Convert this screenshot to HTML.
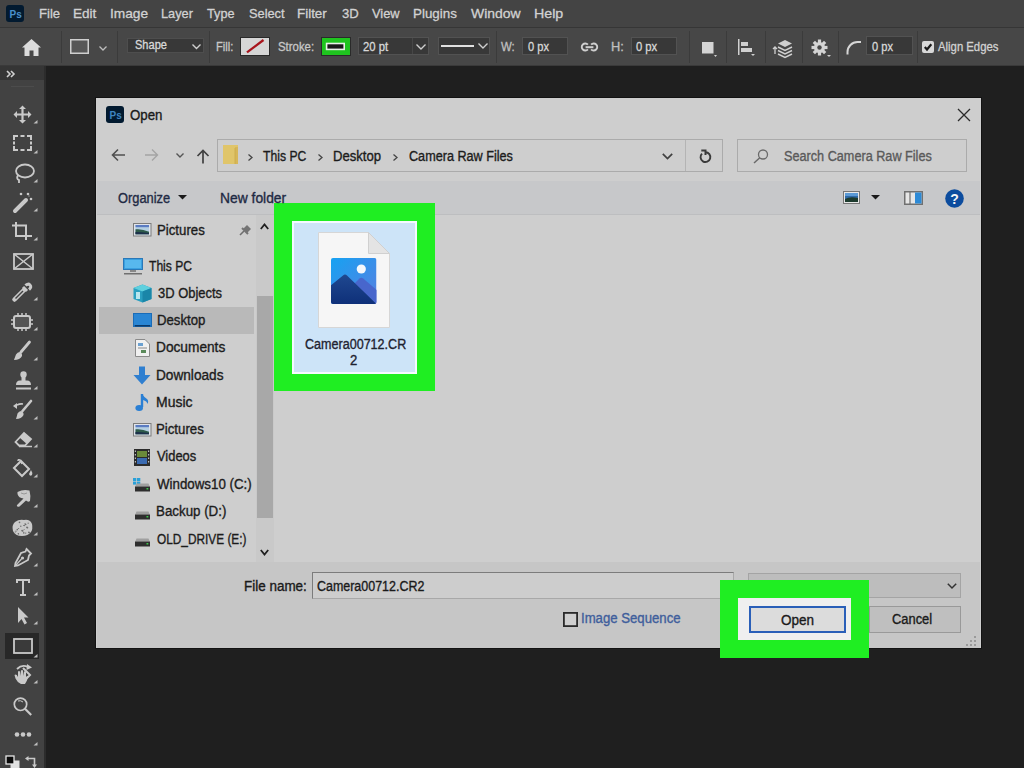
<!DOCTYPE html>
<html><head><meta charset="utf-8">
<style>
*{margin:0;padding:0;box-sizing:border-box}
html,body{width:1024px;height:768px;overflow:hidden;background:#1f1f1f;font-family:"Liberation Sans",sans-serif}
.a{position:absolute}
.t{position:absolute;white-space:nowrap;line-height:1}
svg{position:absolute;overflow:visible}
</style></head><body>
<div class="a" style="left:0px;top:0px;width:1024px;height:27px;background:#444444;"></div>
<div class="a" style="left:0px;top:27px;width:1024px;height:1px;background:#363636;"></div>
<div class="a" style="left:0px;top:28px;width:1024px;height:38px;background:#474747;"></div>
<div class="a" style="left:0px;top:65px;width:1024px;height:1px;background:#3a3a3a;"></div>
<div class="a" style="left:0px;top:66px;width:44px;height:14px;background:#353535;"></div>
<div class="a" style="left:0px;top:80px;width:44px;height:688px;background:#424242;"></div>
<div class="a" style="left:44px;top:66px;width:2px;height:702px;background:#2c2c2c;"></div>
<svg style="left:6px;top:4.7px;" width="18" height="17" viewBox="0 0 18 17"><rect x="0" y="0" width="18" height="17" rx="3" fill="#021a30"/><text x="3.6" y="12.5" font-family="Liberation Sans" font-weight="bold" font-size="10" fill="#4a90cc">Ps</text></svg>
<div class="a" style="left:61px;top:31px;width:1px;height:32px;background:#3b3b3b;"></div>
<div class="a" style="left:117px;top:31px;width:1px;height:32px;background:#3b3b3b;"></div>
<div class="a" style="left:209px;top:31px;width:1px;height:32px;background:#3b3b3b;"></div>
<div class="a" style="left:496px;top:31px;width:1px;height:32px;background:#3b3b3b;"></div>
<div class="a" style="left:689px;top:31px;width:1px;height:32px;background:#3b3b3b;"></div>
<div class="a" style="left:726px;top:31px;width:1px;height:32px;background:#3b3b3b;"></div>
<div class="a" style="left:765px;top:31px;width:1px;height:32px;background:#3b3b3b;"></div>
<div class="a" style="left:802px;top:31px;width:1px;height:32px;background:#3b3b3b;"></div>
<div class="a" style="left:838px;top:31px;width:1px;height:32px;background:#3b3b3b;"></div>
<div class="a" style="left:917px;top:31px;width:1px;height:32px;background:#3b3b3b;"></div>
<svg style="left:22px;top:39px;" width="19" height="17" viewBox="0 0 19 17"><path d="M9.5 0 L19 8.5 L16.5 8.5 L16.5 17 L11.5 17 L11.5 11.5 L7.5 11.5 L7.5 17 L2.5 17 L2.5 8.5 L0 8.5 Z" fill="#dcdcdc"/></svg>
<svg style="left:70px;top:39px;" width="19" height="15" viewBox="0 0 19 15"><rect x="0.75" y="0.75" width="17.5" height="13.5" fill="#575757" stroke="#cfcfcf" stroke-width="1.5"/></svg>
<svg style="left:99px;top:46px;" width="8" height="5" viewBox="0 0 8 5"><path d="M0.5 0.5 L4 4 L7.5 0.5" fill="none" stroke="#bdbdbd" stroke-width="1.3"/></svg>
<div class="a" style="left:127px;top:38px;width:77px;height:15px;background:#383838;border:1px solid #4e4e4e"></div>
<svg style="left:192px;top:44px;" width="9" height="5" viewBox="0 0 9 5"><path d="M0.5 0.5 L4.5 4.5 L8.5 0.5" fill="none" stroke="#cfcfcf" stroke-width="1.4"/></svg>
<div class="a" style="left:240px;top:37px;width:30px;height:19px;background:#2a2a2a;"></div>
<div class="a" style="left:241px;top:38px;width:28px;height:17px;background:#d6d6d6;"></div>
<svg style="left:241px;top:38px;" width="28" height="17" viewBox="0 0 28 17"><path d="M6 14.3 L22.5 2" stroke="#a8141c" stroke-width="2.3"/></svg>
<div class="a" style="left:321px;top:37px;width:30px;height:19px;background:#2a2a2a;"></div>
<div class="a" style="left:322px;top:38px;width:28px;height:17px;background:#1fc41f;"></div>
<svg style="left:322px;top:38px;" width="28" height="17" viewBox="0 0 28 17"><rect x="4.6" y="5.5" width="17.6" height="5.9" fill="#1a1a1a" stroke="#e8f0e8" stroke-width="1.6"/></svg>
<div class="a" style="left:358px;top:37px;width:71px;height:18px;background:#383838;border:1px solid #525252"></div>
<div class="a" style="left:412px;top:38px;width:1px;height:16px;background:#474747;"></div>
<svg style="left:416px;top:44px;" width="10" height="6" viewBox="0 0 10 6"><path d="M0.5 0.5 L5 5 L9.5 0.5" fill="none" stroke="#cfcfcf" stroke-width="1.4"/></svg>
<div class="a" style="left:438px;top:37px;width:52px;height:18px;background:#383838;border:1px solid #525252"></div>
<div class="a" style="left:441px;top:45px;width:33px;height:2px;background:#e0e0e0;"></div>
<svg style="left:478px;top:43px;" width="10" height="6" viewBox="0 0 10 6"><path d="M0.5 0.5 L5 5 L9.5 0.5" fill="none" stroke="#cfcfcf" stroke-width="1.4"/></svg>
<div class="a" style="left:522px;top:37px;width:46px;height:18px;background:#383838;border:1px solid #525252"></div>
<svg style="left:581px;top:41px;" width="17" height="12" viewBox="0 0 17 12"><path d="M6.9 3.7 A3.5 3.5 0 1 0 6.9 8.3 M10.1 3.7 A3.5 3.5 0 1 1 10.1 8.3" fill="none" stroke="#cfcfcf" stroke-width="1.9"/><path d="M4.6 6.2 H12.4" stroke="#cfcfcf" stroke-width="2"/></svg>
<div class="a" style="left:631px;top:37px;width:46px;height:18px;background:#383838;border:1px solid #525252"></div>
<svg style="left:702px;top:42px;" width="16" height="16" viewBox="0 0 16 16"><rect x="0" y="0" width="11.5" height="11.5" fill="#d4d4d4"/><path d="M12 13 L15 13 L13.5 15 Z" fill="#cfcfcf"/></svg>
<svg style="left:738px;top:39px;" width="17" height="18" viewBox="0 0 17 18"><rect x="0" y="0" width="1.5" height="16" fill="#d0d0d0"/><rect x="3" y="3" width="7" height="4" fill="#d0d0d0"/><rect x="3" y="9" width="11" height="4" fill="#d0d0d0"/><path d="M13 15 L17 15 L15 17 Z" fill="#cfcfcf"/></svg>
<svg style="left:772px;top:39px;" width="23" height="19" viewBox="0 0 23 19"><path d="M3 8 L3 15 M1 10 L3 8 L5 10" fill="none" stroke="#d0d0d0" stroke-width="1.3"/><path d="M13 1 L20 4.5 L13 8 L6 4.5 Z" fill="#d0d0d0"/><path d="M6 8 L13 11.5 L20 8 M6 11.5 L13 15 L20 11.5 M6 15 L13 18.5 L20 15" fill="none" stroke="#d0d0d0" stroke-width="1.5"/></svg>
<svg style="left:811px;top:40px;" width="20" height="18" viewBox="0 0 20 18"><g transform="translate(8.5,7.5)"><circle r="5.5" fill="#d4d4d4"/><g fill="#d4d4d4"><rect x="-1.6" y="-8" width="3.2" height="16"/><rect x="-1.6" y="-8" width="3.2" height="16" transform="rotate(45)"/><rect x="-1.6" y="-8" width="3.2" height="16" transform="rotate(90)"/><rect x="-1.6" y="-8" width="3.2" height="16" transform="rotate(135)"/></g><circle r="2.2" fill="#474747"/></g><path d="M16 15 L20 15 L18 17 Z" fill="#cfcfcf"/></svg>
<svg style="left:846px;top:40px;" width="17" height="15" viewBox="0 0 17 15"><path d="M1.5 14.5 L1.5 12 A10 10 0 0 1 11.5 2 L15 2" fill="none" stroke="#d6d6d6" stroke-width="2"/></svg>
<div class="a" style="left:866px;top:36px;width:47px;height:19px;background:#383838;border:1px solid #525252"></div>
<svg style="left:921.5px;top:40.5px;" width="12" height="12" viewBox="0 0 12 12"><rect x="0" y="0" width="12" height="12" rx="2" fill="#d8d8d8"/><path d="M2.8 6 L5 8.5 L9.3 3.3" fill="none" stroke="#1a1a1a" stroke-width="2.2"/></svg>
<svg style="left:6px;top:70px;" width="10" height="8" viewBox="0 0 10 8"><path d="M1 1 L4 4 L1 7 M5 1 L8 4 L5 7" fill="none" stroke="#d0d0d0" stroke-width="1.6"/></svg>
<div class="a" style="left:11px;top:86px;width:23px;height:1px;background:#4c4c4c;"></div>
<svg style="left:13px;top:105px;" width="19" height="19" viewBox="0 0 19 19"><path d="M9.5 0.5 L13 4 L10.6 4 L10.6 8.4 L15 8.4 L15 6 L18.5 9.5 L15 13 L15 10.6 L10.6 10.6 L10.6 15 L13 15 L9.5 18.5 L6 15 L8.4 15 L8.4 10.6 L4 10.6 L4 13 L0.5 9.5 L4 6 L4 8.4 L8.4 8.4 L8.4 4 L6 4 Z" fill="#c9c9c9"/></svg>
<svg style="left:33px;top:120px;" width="5" height="4" viewBox="0 0 5 4"><path d="M4.5 0 L4.5 3.5 L0.5 3.5 Z" fill="#bdbdbd"/></svg>
<svg style="left:13px;top:135px;" width="19" height="16" viewBox="0 0 19 16"><path d="M1 5 V1 H5 M7.5 1 H11.5 M14 1 H18 V5 M18 6.5 V9.5 M18 11 V15 H14 M11.5 15 H7.5 M5 15 H1 V11 M1 9.5 V6.5" fill="none" stroke="#c9c9c9" stroke-width="2"/></svg>
<svg style="left:33px;top:150px;" width="5" height="4" viewBox="0 0 5 4"><path d="M4.5 0 L4.5 3.5 L0.5 3.5 Z" fill="#bdbdbd"/></svg>
<svg style="left:14px;top:163px;" width="21" height="21" viewBox="0 0 21 21"><ellipse cx="11" cy="8" rx="9" ry="6.5" fill="none" stroke="#c9c9c9" stroke-width="1.8"/><path d="M4 12 Q2 16 5 17 L5 20" fill="none" stroke="#c9c9c9" stroke-width="1.8"/></svg>
<svg style="left:33px;top:179px;" width="5" height="4" viewBox="0 0 5 4"><path d="M4.5 0 L4.5 3.5 L0.5 3.5 Z" fill="#bdbdbd"/></svg>
<svg style="left:13px;top:192px;" width="22" height="21" viewBox="0 0 22 21"><path d="M2 19 L13 8" stroke="#c9c9c9" stroke-width="4" stroke-linecap="round"/><circle cx="8" cy="2" r="1.3" fill="#c9c9c9"/><circle cx="15" cy="2" r="1.3" fill="#c9c9c9"/><circle cx="18" cy="7" r="1.3" fill="#c9c9c9"/><path d="M15.5 4 l1 0" stroke="#c9c9c9"/></svg>
<svg style="left:33px;top:208px;" width="5" height="4" viewBox="0 0 5 4"><path d="M4.5 0 L4.5 3.5 L0.5 3.5 Z" fill="#bdbdbd"/></svg>
<svg style="left:11px;top:222px;" width="23" height="19" viewBox="0 0 23 19"><path d="M1 3.5 L15 3.5 L15 18 M5 0 L5 14 L21 14" fill="none" stroke="#c9c9c9" stroke-width="2"/></svg>
<svg style="left:33px;top:237px;" width="5" height="4" viewBox="0 0 5 4"><path d="M4.5 0 L4.5 3.5 L0.5 3.5 Z" fill="#bdbdbd"/></svg>
<svg style="left:13px;top:253px;" width="21" height="17" viewBox="0 0 21 17"><rect x="1" y="1" width="19" height="15" fill="none" stroke="#c9c9c9" stroke-width="1.8"/><path d="M1 1 L20 16 M20 1 L1 16" stroke="#c9c9c9" stroke-width="1.5"/></svg>
<svg style="left:12px;top:282px;" width="21" height="20" viewBox="0 0 21 20"><path d="M2.5 17.5 L12 8" stroke="#c9c9c9" stroke-width="4.5" stroke-linecap="round"/><path d="M3.5 16.5 L11 9" stroke="#424242" stroke-width="1.5"/><path d="M11 5 L15 9 M13.5 3.5 Q16 1 18 3 Q20 5 17 7.5" stroke="#c9c9c9" stroke-width="3" fill="none"/></svg>
<svg style="left:33px;top:297px;" width="5" height="4" viewBox="0 0 5 4"><path d="M4.5 0 L4.5 3.5 L0.5 3.5 Z" fill="#bdbdbd"/></svg>
<svg style="left:11px;top:313px;" width="22" height="18" viewBox="0 0 22 18"><rect x="3" y="3" width="16" height="12" rx="2" fill="#555" stroke="#c9c9c9" stroke-width="2"/><path d="M7 0 V3 M11 0 V3 M15 0 V3 M7 15 V18 M11 15 V18 M15 15 V18 M0 7 H3 M0 11 H3 M19 7 H22 M19 11 H22" stroke="#c9c9c9" stroke-width="1.5"/></svg>
<svg style="left:33px;top:327px;" width="5" height="4" viewBox="0 0 5 4"><path d="M4.5 0 L4.5 3.5 L0.5 3.5 Z" fill="#bdbdbd"/></svg>
<svg style="left:13px;top:341px;" width="18" height="20" viewBox="0 0 18 20"><path d="M16.5 1 L8 11" stroke="#c9c9c9" stroke-width="2.8" stroke-linecap="round"/><path d="M6.5 11 Q9.5 12 9 15 Q7 19 1 19 Q2 16 3 13.5 Q4.5 11 6.5 11 Z" fill="#c9c9c9"/></svg>
<svg style="left:33px;top:357px;" width="5" height="4" viewBox="0 0 5 4"><path d="M4.5 0 L4.5 3.5 L0.5 3.5 Z" fill="#bdbdbd"/></svg>
<svg style="left:15px;top:371px;" width="17" height="19" viewBox="0 0 17 19"><circle cx="8.5" cy="3.5" r="3.2" fill="#c9c9c9"/><rect x="6.5" y="5" width="4" height="5" fill="#c9c9c9"/><path d="M1 14 Q1 9.5 5 9.5 L12 9.5 Q16 9.5 16 14 Z" fill="#c9c9c9"/><rect x="1" y="16.5" width="15" height="2" fill="#c9c9c9"/></svg>
<svg style="left:33px;top:386px;" width="5" height="4" viewBox="0 0 5 4"><path d="M4.5 0 L4.5 3.5 L0.5 3.5 Z" fill="#bdbdbd"/></svg>
<svg style="left:12px;top:400px;" width="21" height="20" viewBox="0 0 21 20"><path d="M19 1 L10.5 11" stroke="#c9c9c9" stroke-width="2.6" stroke-linecap="round"/><path d="M9 11 Q12 12 11.5 15 Q9.5 19 4 19 Q5 16 5.5 13.5 Q7 11 9 11 Z" fill="#c9c9c9"/><path d="M1 6 L5 3 L5 9 Z" fill="#c9c9c9"/><path d="M5 5 Q8 3.5 11 4" fill="none" stroke="#c9c9c9" stroke-width="1.5"/></svg>
<svg style="left:33px;top:416px;" width="5" height="4" viewBox="0 0 5 4"><path d="M4.5 0 L4.5 3.5 L0.5 3.5 Z" fill="#bdbdbd"/></svg>
<svg style="left:14px;top:431px;" width="19" height="17" viewBox="0 0 19 17"><path d="M1.5 11 L10 2 L17 8 L11 14.5 L5 14.5 Z" fill="none" stroke="#c9c9c9" stroke-width="1.8"/><path d="M10 2 L17 8 L12.5 12.8 L5.5 6.5 Z" fill="#c9c9c9"/><path d="M5 15.5 L18 15.5" stroke="#c9c9c9" stroke-width="1.5"/></svg>
<svg style="left:33px;top:444px;" width="5" height="4" viewBox="0 0 5 4"><path d="M4.5 0 L4.5 3.5 L0.5 3.5 Z" fill="#bdbdbd"/></svg>
<svg style="left:12px;top:459px;" width="23" height="20" viewBox="0 0 23 20"><path d="M2 9 L9 2 L17 10 L10 17 Z" fill="none" stroke="#c9c9c9" stroke-width="2"/><path d="M6 2 Q6 0 8 1 L10 5" fill="none" stroke="#c9c9c9" stroke-width="1.5"/><path d="M19 11 Q21 14 20 16 Q18 18 17 15 Z" fill="#c9c9c9"/></svg>
<svg style="left:33px;top:474px;" width="5" height="4" viewBox="0 0 5 4"><path d="M4.5 0 L4.5 3.5 L0.5 3.5 Z" fill="#bdbdbd"/></svg>
<svg style="left:16px;top:489px;" width="16" height="19" viewBox="0 0 16 19"><path d="M1.5 3 Q7 0 13.5 1.5 Q15 7 14 12 Q12 13.5 10 11.5 L3.5 17.5 Q1 18.5 0.8 16.3 L7.5 9.5 Q2.5 9 1.5 5 Z" fill="#c9c9c9"/><path d="M5 4 Q8 6 11 4" fill="none" stroke="#8a8a8a" stroke-width="0.8"/></svg>
<svg style="left:33px;top:504px;" width="5" height="4" viewBox="0 0 5 4"><path d="M4.5 0 L4.5 3.5 L0.5 3.5 Z" fill="#bdbdbd"/></svg>
<svg style="left:12px;top:519px;" width="21" height="18" viewBox="0 0 21 18"><path d="M3 3 Q7 0 12 1 Q18 0 20 5 Q21 10 19 13 Q16 17 10 17 Q3 17 1 12 Q-0.5 6 3 3 Z" fill="#c9c9c9"/><g fill="#6e6e6e"><circle cx="6.6" cy="9.5" r="0.6"/><circle cx="12.1" cy="10.5" r="0.5"/><circle cx="3.2" cy="13.0" r="0.6"/><circle cx="6.5" cy="14.9" r="0.7"/><circle cx="15.5" cy="8.7" r="0.8"/><circle cx="5.3" cy="10.6" r="0.8"/><circle cx="10.8" cy="11.9" r="0.8"/><circle cx="4.0" cy="12.1" r="0.7"/><circle cx="7.5" cy="3.4" r="0.8"/><circle cx="10.1" cy="11.6" r="0.9"/><circle cx="13.7" cy="14.1" r="0.7"/><circle cx="15.0" cy="8.3" r="0.9"/><circle cx="16.2" cy="4.2" r="0.6"/><circle cx="6.3" cy="14.6" r="0.7"/><circle cx="12.4" cy="6.6" r="0.7"/><circle cx="8.8" cy="7.2" r="0.7"/><circle cx="11.8" cy="13.9" r="0.8"/><circle cx="16.9" cy="13.3" r="0.9"/><circle cx="13.1" cy="5.0" r="0.8"/><circle cx="17.5" cy="13.9" r="0.7"/><circle cx="13.7" cy="5.5" r="0.8"/><circle cx="11.6" cy="6.4" r="0.5"/></g></svg>
<svg style="left:33px;top:532px;" width="5" height="4" viewBox="0 0 5 4"><path d="M4.5 0 L4.5 3.5 L0.5 3.5 Z" fill="#bdbdbd"/></svg>
<svg style="left:14px;top:548px;" width="18" height="19" viewBox="0 0 18 19"><path d="M12.5 1 L17 5.5 L15 7.5 L14 12 L4 17.5 L1 18 L1.5 15 L7 5 L11.5 3.5 Z" fill="none" stroke="#c9c9c9" stroke-width="1.8"/><circle cx="8.5" cy="10" r="1.6" fill="#c9c9c9"/><path d="M2 17 L7.5 11" stroke="#c9c9c9" stroke-width="1.2"/></svg>
<svg style="left:33px;top:563px;" width="5" height="4" viewBox="0 0 5 4"><path d="M4.5 0 L4.5 3.5 L0.5 3.5 Z" fill="#bdbdbd"/></svg>
<svg style="left:16px;top:579px;" width="14" height="17" viewBox="0 0 14 17"><path d="M1 4 L1 1 L13 1 L13 4 M7 1 L7 16 M4 16 L10 16" fill="none" stroke="#c9c9c9" stroke-width="2"/></svg>
<svg style="left:33px;top:592px;" width="5" height="4" viewBox="0 0 5 4"><path d="M4.5 0 L4.5 3.5 L0.5 3.5 Z" fill="#bdbdbd"/></svg>
<svg style="left:17px;top:606px;" width="12" height="19" viewBox="0 0 12 19"><path d="M1 1 L1 17 L4.5 13 L7.5 18.5 L10 17 L7 11.5 L11.5 11.5 Z" fill="#c9c9c9"/></svg>
<svg style="left:33px;top:621px;" width="5" height="4" viewBox="0 0 5 4"><path d="M4.5 0 L4.5 3.5 L0.5 3.5 Z" fill="#bdbdbd"/></svg>
<div class="a" style="left:5px;top:633px;width:34px;height:26px;background:#282828;"></div>
<svg style="left:13px;top:638px;" width="20" height="16" viewBox="0 0 20 16"><rect x="1" y="1" width="18" height="14" fill="#3a3a3a" stroke="#c9c9c9" stroke-width="1.8"/></svg>
<svg style="left:33px;top:654px;" width="5" height="4" viewBox="0 0 5 4"><path d="M4.5 0 L4.5 3.5 L0.5 3.5 Z" fill="#bdbdbd"/></svg>
<svg style="left:13px;top:664px;" width="21" height="21" viewBox="0 0 21 21"><path d="M10 4 L17 11 L10 18" fill="none" stroke="#c9c9c9" stroke-width="2"/><path d="M4 5 Q9 0 15 3" fill="none" stroke="#c9c9c9" stroke-width="1.8"/><path d="M14 0 L19 3.5 L13.5 6 Z" fill="#c9c9c9"/><path d="M8 20 Q4 18 2.5 14.5 L1.5 11 Q2.5 10 3.8 11 L5 13 L5 7.5 Q6 6.5 7 7.5 L7.2 12 L8 6.5 Q9 5.5 10 6.5 L10 12 L11 7.5 Q12 6.8 13 7.5 L13 13 Q14 11.5 15.5 12 Q14 17 12 20 Z" fill="#c9c9c9"/></svg>
<svg style="left:33px;top:680px;" width="5" height="4" viewBox="0 0 5 4"><path d="M4.5 0 L4.5 3.5 L0.5 3.5 Z" fill="#bdbdbd"/></svg>
<svg style="left:13px;top:697px;" width="20" height="19" viewBox="0 0 20 19"><circle cx="7.5" cy="7.3" r="6.2" fill="none" stroke="#c9c9c9" stroke-width="1.7"/><path d="M12 11.8 L18.2 18" stroke="#c9c9c9" stroke-width="2.2"/><path d="M5 4 Q7.5 3 10 5" fill="none" stroke="#c9c9c9" stroke-width="1"/></svg>
<svg style="left:13px;top:731px;" width="20" height="7" viewBox="0 0 20 7"><circle cx="4" cy="3.5" r="2.3" fill="#c9c9c9"/><circle cx="10" cy="3.5" r="2.3" fill="#c9c9c9"/><circle cx="16" cy="3.5" r="2.3" fill="#c9c9c9"/></svg>
<svg style="left:33px;top:742px;" width="5" height="4" viewBox="0 0 5 4"><path d="M4.5 0 L4.5 3.5 L0.5 3.5 Z" fill="#bdbdbd"/></svg>
<svg style="left:5px;top:755px;" width="14" height="13" viewBox="0 0 14 13"><rect x="5.5" y="5.5" width="9" height="9" fill="#e0e0e0"/><rect x="1" y="1" width="8" height="8" fill="#0a0a0a" stroke="#e6e6e6" stroke-width="1.3"/></svg>
<svg style="left:25px;top:756px;" width="12" height="12" viewBox="0 0 12 12"><path d="M3 2.5 L9.5 2.5 L9.5 9" fill="none" stroke="#c9c9c9" stroke-width="1.6"/><path d="M0 2.5 L3.5 0 L3.5 5 Z M7 8.5 L12 8.5 L9.5 12 Z" fill="#c9c9c9"/></svg>
<div class="a" style="left:95px;top:97px;width:887px;height:552px;background:#121212;"></div>
<div class="a" style="left:96px;top:98px;width:885px;height:550px;background:#cecece;"></div>
<svg style="left:106px;top:106px;" width="18" height="17" viewBox="0 0 18 17"><rect x="0" y="0" width="18" height="17" rx="3" fill="#021a30"/><text x="3.6" y="12.6" font-family="Liberation Sans" font-weight="bold" font-size="10" fill="#3f84c0">Ps</text></svg>
<svg style="left:957px;top:108px;" width="14" height="14" viewBox="0 0 14 14"><path d="M1 1 L13 13 M13 1 L1 13" stroke="#2a2a2a" stroke-width="1.3"/></svg>
<svg style="left:111px;top:148px;" width="15" height="14" viewBox="0 0 15 14"><path d="M14 7 L1.5 7 M7 1.5 L1.5 7 L7 12.5" fill="none" stroke="#505050" stroke-width="1.6"/></svg>
<svg style="left:144px;top:148px;" width="15" height="14" viewBox="0 0 15 14"><path d="M1 7 L13.5 7 M8 1.5 L13.5 7 L8 12.5" fill="none" stroke="#a4a4a4" stroke-width="1.4"/></svg>
<svg style="left:176px;top:153px;" width="8" height="5" viewBox="0 0 8 5"><path d="M0.5 0.5 L4 4 L7.5 0.5" fill="none" stroke="#555" stroke-width="1.4"/></svg>
<svg style="left:196px;top:149px;" width="14" height="15" viewBox="0 0 14 15"><path d="M7 14.5 L7 1.5 M1.5 7 L7 1.5 L12.5 7" fill="none" stroke="#404040" stroke-width="1.7"/></svg>
<div class="a" style="left:217px;top:139px;width:506px;height:33px;background:#cecece;border:1px solid #ababab"></div>
<div class="a" style="left:685px;top:140px;width:1px;height:31px;background:#b4b4b4;"></div>
<svg style="left:223px;top:145px;" width="15" height="19" viewBox="0 0 15 19"><rect x="0" y="0" width="15" height="19" fill="#e0c56a"/><rect x="12" y="2" width="3" height="17" fill="#d7b759"/><path d="M12 3 L12 19" stroke="#c9a94a" stroke-width="0.8"/></svg>
<svg style="left:247.7px;top:153.5px;" width="5" height="7" viewBox="0 0 5 7"><path d="M0.5 0.5 L4 3.5 L0.5 6.5" fill="none" stroke="#444" stroke-width="1.3"/></svg>
<svg style="left:317.9px;top:153.5px;" width="5" height="7" viewBox="0 0 5 7"><path d="M0.5 0.5 L4 3.5 L0.5 6.5" fill="none" stroke="#444" stroke-width="1.3"/></svg>
<svg style="left:393.1px;top:153.5px;" width="5" height="7" viewBox="0 0 5 7"><path d="M0.5 0.5 L4 3.5 L0.5 6.5" fill="none" stroke="#444" stroke-width="1.3"/></svg>
<svg style="left:662px;top:153px;" width="11" height="7" viewBox="0 0 11 7"><path d="M0.8 0.8 L5.5 5.5 L10.2 0.8" fill="none" stroke="#404040" stroke-width="1.7"/></svg>
<svg style="left:699px;top:148px;" width="14" height="16" viewBox="0 0 14 16"><path d="M6.5 4.2 A4.9 4.9 0 1 1 3.0 5.6" fill="none" stroke="#3a3a3a" stroke-width="1.9"/><path d="M2.3 2.4 L6.5 2.4 L6.5 7" fill="none" stroke="#3a3a3a" stroke-width="2"/></svg>
<div class="a" style="left:737px;top:139px;width:230px;height:33px;background:#cecece;border:1px solid #ababab"></div>
<svg style="left:753px;top:149px;" width="16" height="15" viewBox="0 0 16 15"><circle cx="10" cy="5.5" r="4.5" fill="none" stroke="#6a6a6a" stroke-width="1.3"/><path d="M6.8 8.7 L1 14" stroke="#6a6a6a" stroke-width="1.5"/></svg>
<div class="a" style="left:97px;top:181px;width:883px;height:34px;background:#c7c8ca;"></div>
<div class="a" style="left:97px;top:214px;width:883px;height:1px;background:#bdbec0;"></div>
<svg style="left:178px;top:195px;" width="9" height="5" viewBox="0 0 9 5"><path d="M0 0 L9 0 L4.5 4.5 Z" fill="#1a1a1a"/></svg>
<svg style="left:843px;top:191px;" width="17" height="13" viewBox="0 0 17 13"><rect x="0.5" y="0.5" width="16" height="12" fill="#e8e8e8" stroke="#777"/><rect x="2" y="2" width="13" height="9" fill="#2f6aa8"/><path d="M2 8 Q7 5 15 7 L15 11 L2 11 Z" fill="#1d3b2e"/><rect x="2" y="2" width="13" height="3" fill="#5b9ad6"/></svg>
<svg style="left:871px;top:195px;" width="9" height="5" viewBox="0 0 9 5"><path d="M0 0 L9 0 L4.5 4.5 Z" fill="#1a1a1a"/></svg>
<svg style="left:904px;top:191px;" width="19" height="14" viewBox="0 0 19 14"><rect x="0.75" y="0.75" width="17.5" height="12.5" fill="#e6e6e6" stroke="#707070" stroke-width="1.5"/><rect x="11" y="1.5" width="6.5" height="11" fill="#2d8ad6"/><path d="M6 1 L6 13" stroke="#707070" stroke-width="1.2"/></svg>
<svg style="left:945px;top:189px;" width="19" height="19" viewBox="0 0 19 19"><circle cx="9.5" cy="9.5" r="9.3" fill="#0c4c9e"/><text x="9.5" y="15" text-anchor="middle" font-family="Liberation Sans" font-weight="bold" font-size="14" fill="#f4f4f4">?</text></svg>
<div class="a" style="left:99px;top:307px;width:155px;height:27px;background:#b9b9b9;"></div>
<div class="a" style="left:256px;top:215px;width:18px;height:347px;background:#c9c9c9;"></div>
<div class="a" style="left:257px;top:296px;width:16px;height:222px;background:#a8a8a8;"></div>
<svg style="left:260px;top:223px;" width="9" height="7" viewBox="0 0 9 7"><path d="M0.8 6 L4.5 1.5 L8.2 6" fill="none" stroke="#202020" stroke-width="1.8"/></svg>
<svg style="left:260px;top:549px;" width="9" height="7" viewBox="0 0 9 7"><path d="M0.8 1 L4.5 5.5 L8.2 1" fill="none" stroke="#202020" stroke-width="1.8"/></svg>
<svg style="left:239px;top:224px;" width="13" height="12" viewBox="0 0 13 12"><path d="M1 11 L5 7" stroke="#6e6e6e" stroke-width="1.6"/><path d="M4 5 L8 1 L12 5 L8 9 Z" fill="#747474"/><path d="M3 4 L9 10" stroke="#747474" stroke-width="2"/></svg>
<svg style="left:133px;top:223px;" width="19" height="14" viewBox="0 0 19 14"><rect x="0.5" y="0.5" width="17.5" height="12.5" fill="#dfe3ea" stroke="#7c7c7c"/><rect x="2.5" y="2" width="13.5" height="9.3" fill="#b4cfe2"/><rect x="2.5" y="2" width="13.5" height="2.2" fill="#5b7cc2"/><path d="M2.5 6.3 Q9 5.5 16 8.8 L16 11.3 L2.5 11.3 Z" fill="#2d5a4a"/><path d="M2.5 9 Q9 9 16 10 L16 11.3 L2.5 11.3 Z" fill="#1c2f4a"/></svg>
<svg style="left:133px;top:423px;" width="19" height="14" viewBox="0 0 19 14"><rect x="0.5" y="0.5" width="17.5" height="12.5" fill="#dfe3ea" stroke="#7c7c7c"/><rect x="2.5" y="2" width="13.5" height="9.3" fill="#b4cfe2"/><rect x="2.5" y="2" width="13.5" height="2.2" fill="#5b7cc2"/><path d="M2.5 6.3 Q9 5.5 16 8.8 L16 11.3 L2.5 11.3 Z" fill="#2d5a4a"/><path d="M2.5 9 Q9 9 16 10 L16 11.3 L2.5 11.3 Z" fill="#1c2f4a"/></svg>
<svg style="left:123px;top:258px;" width="20" height="17" viewBox="0 0 20 17"><rect x="0.5" y="0.5" width="19" height="11" fill="#3aa0e0" stroke="#2a78b8"/><rect x="2" y="2" width="16" height="8" fill="#58b8ee"/><rect x="7" y="12" width="6" height="2" fill="#888"/><rect x="1" y="15" width="18" height="1.5" fill="#707070"/></svg>
<svg style="left:133px;top:284px;" width="19" height="19" viewBox="0 0 19 19"><path d="M9.5 0.5 L18.5 4 L18.5 15 L9.5 18.5 L0.5 15 L0.5 4 Z" fill="#2a9fc0"/><path d="M0.5 4 L9.5 7.5 L18.5 4 L9.5 0.5 Z" fill="#5fd0de"/><path d="M9.5 7.5 L9.5 18.5 L18.5 15 L18.5 4 Z" fill="#1a86a8"/><rect x="3" y="8" width="4" height="7" fill="#b9e6ee"/></svg>
<svg style="left:133px;top:313px;" width="19" height="15" viewBox="0 0 19 15"><rect x="0" y="0" width="19" height="14" fill="#1a6cb8"/><rect x="1" y="1" width="17" height="11" fill="#2a86d4"/><rect x="2" y="12" width="15" height="1.5" fill="#0a3a6a"/></svg>
<svg style="left:135px;top:339px;" width="15" height="18" viewBox="0 0 15 18"><path d="M0.5 0.5 L10 0.5 L14.5 5 L14.5 17.5 L0.5 17.5 Z" fill="#f0f0f0" stroke="#8a8a8a"/><rect x="3" y="4" width="5" height="3" fill="#6aa0d0"/><rect x="3" y="8.5" width="9" height="1" fill="#888"/><rect x="6" y="11" width="5" height="3" fill="#5a8a5a"/></svg>
<svg style="left:133px;top:366px;" width="18" height="19" viewBox="0 0 18 19"><path d="M6 0.5 L12 0.5 L12 9 L17.5 9 L9 18.5 L0.5 9 L6 9 Z" fill="#2f7fd0"/></svg>
<svg style="left:135px;top:393px;" width="14" height="19" viewBox="0 0 14 19"><path d="M7 1 L7 14" stroke="#2a7fd4" stroke-width="2.4"/><ellipse cx="4.2" cy="15" rx="3.8" ry="3" fill="#2a7fd4"/><path d="M7 1 Q9 4 12 6 Q14 8 12.5 11 Q12 8 8 7" fill="#2a7fd4"/></svg>
<svg style="left:134px;top:449px;" width="16" height="17" viewBox="0 0 16 17"><rect x="0" y="0" width="16" height="17" fill="#2b2b2b"/><rect x="3" y="2" width="10" height="6" fill="#6a8a3a"/><rect x="3" y="9" width="10" height="6" fill="#3a6ab0"/><g fill="#bbb"><rect x="0.8" y="1.5" width="1.2" height="1.5"/><rect x="0.8" y="5" width="1.2" height="1.5"/><rect x="0.8" y="8.5" width="1.2" height="1.5"/><rect x="0.8" y="12" width="1.2" height="1.5"/><rect x="14" y="1.5" width="1.2" height="1.5"/><rect x="14" y="5" width="1.2" height="1.5"/><rect x="14" y="8.5" width="1.2" height="1.5"/><rect x="14" y="12" width="1.2" height="1.5"/></g></svg>
<svg style="left:133px;top:478px;" width="8" height="7" viewBox="0 0 8 7"><g fill="#2aa0d8"><rect x="0" y="0" width="3.3" height="3"/><rect x="4" y="0" width="3.3" height="3"/><rect x="0" y="3.6" width="3.3" height="3"/><rect x="4" y="3.6" width="3.3" height="3"/></g></svg>
<svg style="left:135px;top:483px;" width="15" height="9" viewBox="0 0 15 9"><path d="M1.5 0.5 L13.5 0.5 L14.8 3.5 L0.2 3.5 Z" fill="#a0a0a0"/><rect x="0" y="3.5" width="15" height="5" fill="#2e2e2e"/><rect x="11.5" y="5" width="1.8" height="1.5" fill="#3cc84a"/></svg>
<svg style="left:135px;top:511px;" width="15" height="9" viewBox="0 0 15 9"><path d="M1.5 0.5 L13.5 0.5 L14.8 3.5 L0.2 3.5 Z" fill="#a0a0a0"/><rect x="0" y="3.5" width="15" height="5" fill="#2e2e2e"/><rect x="11.5" y="5" width="1.8" height="1.5" fill="#3cc84a"/></svg>
<svg style="left:135px;top:538px;" width="15" height="9" viewBox="0 0 15 9"><path d="M1.5 0.5 L13.5 0.5 L14.8 3.5 L0.2 3.5 Z" fill="#a0a0a0"/><rect x="0" y="3.5" width="15" height="5" fill="#2e2e2e"/><rect x="11.5" y="5" width="1.8" height="1.5" fill="#3cc84a"/></svg>
<div class="a" style="left:274px;top:203px;width:161px;height:188px;background:#1fee22;"></div>
<div class="a" style="left:292px;top:221px;width:125px;height:153px;background:#f4faff;"></div>
<div class="a" style="left:294px;top:223px;width:121px;height:149px;background:#cde4f8;"></div>
<svg style="left:318px;top:232px;" width="72" height="96" viewBox="0 0 72 96"><defs><clipPath id="ic"><rect x="13" y="26" width="45.5" height="46" rx="2"/></clipPath><linearGradient id="sky" x1="0" y1="0" x2="1" y2="1"><stop offset="0" stop-color="#16a2f2"/><stop offset="1" stop-color="#5a7ee0"/></linearGradient><linearGradient id="mt" x1="0" y1="0" x2="0" y2="1"><stop offset="0" stop-color="#1f4890"/><stop offset="1" stop-color="#0e2f78"/></linearGradient></defs><path d="M0.5 0.5 L50.5 0.5 L71.5 21.5 L71.5 95.5 L0.5 95.5 Z" fill="#f6f6f6" stroke="#d6d6d6"/><path d="M50.5 0.5 L50.5 21.5 L71.5 21.5 Z" fill="#e4e4e4" stroke="#d0d0d0"/><g clip-path="url(#ic)"><rect x="13" y="26" width="45.5" height="46" fill="url(#sky)"/><circle cx="43.3" cy="37" r="4.6" fill="#f4f8fc"/><path d="M36 52 L41.5 46.5 Q43.3 45 45.2 46.5 L60 59 L60 73 Z" fill="#4866cc"/><path d="M12 54 L25 43.5 Q27 41.7 29 43.5 L59 72.5 L12 73 Z" fill="url(#mt)"/></g></svg>
<div class="a" style="left:97px;top:562px;width:883px;height:86px;background:#c6c6c6;"></div>
<div class="a" style="left:312px;top:572px;width:422px;height:27px;background:#cdcdcd;border:1px solid #7c7c7c;border-right-color:#a8a8a8;border-bottom-color:#a8a8a8"></div>
<div class="a" style="left:748px;top:573px;width:213px;height:25px;background:#bdbdbd;border:1px solid #a4a4a4"></div>
<svg style="left:947px;top:583px;" width="10" height="6" viewBox="0 0 10 6"><path d="M0.8 0.8 L5 5 L9.2 0.8" fill="none" stroke="#333" stroke-width="1.5"/></svg>
<svg style="left:563px;top:612px;" width="15" height="15" viewBox="0 0 15 15"><rect x="0.9" y="0.9" width="13.2" height="13.2" fill="#cfcfcf" stroke="#2a2a2a" stroke-width="1.8"/></svg>
<div class="a" style="left:869px;top:606px;width:92px;height:27px;background:#bfbfbf;border:1px solid #999999"></div>
<svg style="left:964px;top:636px;" width="14" height="10" viewBox="0 0 14 10"><g fill="#9a9a9a"><rect x="10" y="0" width="2" height="2"/><rect x="6" y="4" width="2" height="2"/><rect x="10" y="4" width="2" height="2"/><rect x="2" y="8" width="2" height="2"/><rect x="6" y="8" width="2" height="2"/><rect x="10" y="8" width="2" height="2"/></g></svg>
<div class="a" style="left:720px;top:580px;width:149px;height:78px;background:#1fee22;"></div>
<div class="a" style="left:738px;top:598px;width:113px;height:42px;background:#efefef;"></div>
<div class="a" style="left:749px;top:606px;width:97px;height:27px;background:#dcdcdc;border:2px solid #2a5fb8"></div>
<div class="t" style="left:39.43px;top:6.78px;font-size:13.5px;color:#d2d2d2;transform:scaleX(0.9681);transform-origin:0 0;-webkit-text-stroke:0.3px #d2d2d2;">File</div>
<div class="t" style="left:73.10px;top:6.78px;font-size:13.5px;color:#d2d2d2;transform:scaleX(1.0039);transform-origin:0 0;-webkit-text-stroke:0.3px #d2d2d2;">Edit</div>
<div class="t" style="left:109.78px;top:6.78px;font-size:13.5px;color:#d2d2d2;transform:scaleX(1.0163);transform-origin:0 0;-webkit-text-stroke:0.3px #d2d2d2;">Image</div>
<div class="t" style="left:161.06px;top:6.78px;font-size:13.5px;color:#d2d2d2;transform:scaleX(0.9437);transform-origin:0 0;-webkit-text-stroke:0.3px #d2d2d2;">Layer</div>
<div class="t" style="left:207.40px;top:6.78px;font-size:13.5px;color:#d2d2d2;transform:scaleX(0.9388);transform-origin:0 0;-webkit-text-stroke:0.3px #d2d2d2;">Type</div>
<div class="t" style="left:249.00px;top:6.78px;font-size:13.5px;color:#d2d2d2;transform:scaleX(0.9478);transform-origin:0 0;-webkit-text-stroke:0.3px #d2d2d2;">Select</div>
<div class="t" style="left:297.21px;top:6.78px;font-size:13.5px;color:#d2d2d2;transform:scaleX(0.9931);transform-origin:0 0;-webkit-text-stroke:0.3px #d2d2d2;">Filter</div>
<div class="t" style="left:341.50px;top:6.78px;font-size:13.5px;color:#d2d2d2;transform:scaleX(0.9710);transform-origin:0 0;-webkit-text-stroke:0.3px #d2d2d2;">3D</div>
<div class="t" style="left:372.30px;top:6.78px;font-size:13.5px;color:#d2d2d2;transform:scaleX(0.9498);transform-origin:0 0;-webkit-text-stroke:0.3px #d2d2d2;">View</div>
<div class="t" style="left:413.21px;top:6.78px;font-size:13.5px;color:#d2d2d2;transform:scaleX(0.9902);transform-origin:0 0;-webkit-text-stroke:0.3px #d2d2d2;">Plugins</div>
<div class="t" style="left:471.00px;top:6.78px;font-size:13.5px;color:#d2d2d2;transform:scaleX(1.0318);transform-origin:0 0;-webkit-text-stroke:0.3px #d2d2d2;">Window</div>
<div class="t" style="left:533.95px;top:6.78px;font-size:13.5px;color:#d2d2d2;transform:scaleX(1.0550);transform-origin:0 0;-webkit-text-stroke:0.3px #d2d2d2;">Help</div>
<div class="t" style="left:135.40px;top:39.35px;font-size:12px;color:#d8d8d8;transform:scaleX(0.9193);transform-origin:0 0;-webkit-text-stroke:0.3px #d8d8d8;">Shape</div>
<div class="t" style="left:215.51px;top:41.42px;font-size:12.5px;color:#c8c8c8;transform:scaleX(0.8905);transform-origin:0 0;-webkit-text-stroke:0.3px #c8c8c8;">Fill:</div>
<div class="t" style="left:277.50px;top:41.42px;font-size:12.5px;color:#c8c8c8;transform:scaleX(0.9124);transform-origin:0 0;-webkit-text-stroke:0.3px #c8c8c8;">Stroke:</div>
<div class="t" style="left:362.60px;top:41.42px;font-size:12.5px;color:#d8d8d8;transform:scaleX(0.9037);transform-origin:0 0;-webkit-text-stroke:0.3px #d8d8d8;">20 pt</div>
<div class="t" style="left:501.00px;top:41.42px;font-size:12.5px;color:#c0c0c0;transform:scaleX(0.9127);transform-origin:0 0;-webkit-text-stroke:0.3px #c0c0c0;">W:</div>
<div class="t" style="left:527.60px;top:41.42px;font-size:12.5px;color:#d8d8d8;transform:scaleX(0.8861);transform-origin:0 0;-webkit-text-stroke:0.3px #d8d8d8;">0 px</div>
<div class="t" style="left:610.58px;top:41.42px;font-size:12.5px;color:#c0c0c0;transform:scaleX(1.0247);transform-origin:0 0;-webkit-text-stroke:0.3px #c0c0c0;">H:</div>
<div class="t" style="left:636.20px;top:41.42px;font-size:12.5px;color:#d8d8d8;transform:scaleX(0.8984);transform-origin:0 0;-webkit-text-stroke:0.3px #d8d8d8;">0 px</div>
<div class="t" style="left:871.70px;top:41.42px;font-size:12.5px;color:#d8d8d8;transform:scaleX(0.8861);transform-origin:0 0;-webkit-text-stroke:0.3px #d8d8d8;">0 px</div>
<div class="t" style="left:938.30px;top:40.92px;font-size:12.5px;color:#d2d2d2;transform:scaleX(0.9058);transform-origin:0 0;-webkit-text-stroke:0.3px #d2d2d2;">Align Edges</div>
<div class="t" style="left:130.30px;top:108.16px;font-size:14px;color:#1a1a1a;transform:scaleX(0.9473);transform-origin:0 0;-webkit-text-stroke:0.35px #1a1a1a;">Open</div>
<div class="t" style="left:263.20px;top:149.16px;font-size:14px;color:#1c1c1c;transform:scaleX(0.8696);transform-origin:0 0;-webkit-text-stroke:0.35px #1c1c1c;">This PC</div>
<div class="t" style="left:333.36px;top:149.16px;font-size:14px;color:#1c1c1c;transform:scaleX(0.9353);transform-origin:0 0;-webkit-text-stroke:0.35px #1c1c1c;">Desktop</div>
<div class="t" style="left:408.70px;top:149.16px;font-size:14px;color:#1c1c1c;transform:scaleX(0.9024);transform-origin:0 0;-webkit-text-stroke:0.35px #1c1c1c;">Camera Raw Files</div>
<div class="t" style="left:784.20px;top:148.86px;font-size:14px;color:#5a5a5a;transform:scaleX(0.9046);transform-origin:0 0;-webkit-text-stroke:0.35px #5a5a5a;">Search Camera Raw Files</div>
<div class="t" style="left:118.00px;top:190.66px;font-size:14px;color:#1f2a44;transform:scaleX(0.9172);transform-origin:0 0;-webkit-text-stroke:0.35px #1f2a44;">Organize</div>
<div class="t" style="left:220.01px;top:190.66px;font-size:14px;color:#1f2a44;transform:scaleX(0.9886);transform-origin:0 0;-webkit-text-stroke:0.35px #1f2a44;">New folder</div>
<div class="t" style="left:156.76px;top:222.66px;font-size:14px;color:#1c1c1c;transform:scaleX(0.9441);transform-origin:0 0;-webkit-text-stroke:0.35px #1c1c1c;">Pictures</div>
<div class="t" style="left:148.75px;top:258.66px;font-size:14px;color:#1c1c1c;transform:scaleX(0.8626);transform-origin:0 0;-webkit-text-stroke:0.35px #1c1c1c;">This PC</div>
<div class="t" style="left:157.70px;top:285.96px;font-size:14px;color:#1c1c1c;transform:scaleX(0.9242);transform-origin:0 0;-webkit-text-stroke:0.35px #1c1c1c;">3D Objects</div>
<div class="t" style="left:156.76px;top:313.36px;font-size:14px;color:#1c1c1c;transform:scaleX(0.9412);transform-origin:0 0;-webkit-text-stroke:0.35px #1c1c1c;">Desktop</div>
<div class="t" style="left:156.42px;top:340.46px;font-size:14px;color:#1c1c1c;transform:scaleX(0.9784);transform-origin:0 0;-webkit-text-stroke:0.35px #1c1c1c;">Documents</div>
<div class="t" style="left:156.43px;top:367.86px;font-size:14px;color:#1c1c1c;transform:scaleX(0.9742);transform-origin:0 0;-webkit-text-stroke:0.35px #1c1c1c;">Downloads</div>
<div class="t" style="left:156.40px;top:394.66px;font-size:14px;color:#1c1c1c;transform:scaleX(0.9984);transform-origin:0 0;-webkit-text-stroke:0.35px #1c1c1c;">Music</div>
<div class="t" style="left:156.46px;top:422.46px;font-size:14px;color:#1c1c1c;transform:scaleX(0.9441);transform-origin:0 0;-webkit-text-stroke:0.35px #1c1c1c;">Pictures</div>
<div class="t" style="left:157.40px;top:449.26px;font-size:14px;color:#1c1c1c;transform:scaleX(0.9212);transform-origin:0 0;-webkit-text-stroke:0.35px #1c1c1c;">Videos</div>
<div class="t" style="left:157.20px;top:477.46px;font-size:14px;color:#1c1c1c;transform:scaleX(0.9513);transform-origin:0 0;-webkit-text-stroke:0.35px #1c1c1c;">Windows10 (C:)</div>
<div class="t" style="left:156.25px;top:504.46px;font-size:14px;color:#1c1c1c;transform:scaleX(0.9523);transform-origin:0 0;-webkit-text-stroke:0.35px #1c1c1c;">Backup (D:)</div>
<div class="t" style="left:157.20px;top:531.76px;font-size:14px;color:#1c1c1c;transform:scaleX(0.8456);transform-origin:0 0;-webkit-text-stroke:0.35px #1c1c1c;">OLD_DRIVE (E:)</div>
<div class="t" style="left:304.50px;top:336.76px;font-size:14px;color:#1e2230;transform:scaleX(0.8969);transform-origin:0 0;-webkit-text-stroke:0.35px #1e2230;">Camera00712.CR</div>
<div class="t" style="left:350.00px;top:353.46px;font-size:14px;color:#1e2230;transform:scaleX(0.9375);transform-origin:0 0;-webkit-text-stroke:0.35px #1e2230;">2</div>
<div class="t" style="left:243.74px;top:578.66px;font-size:14px;color:#1a1a1a;transform:scaleX(0.9611);transform-origin:0 0;-webkit-text-stroke:0.35px #1a1a1a;">File name:</div>
<div class="t" style="left:316.80px;top:578.66px;font-size:14px;color:#1a1a1a;transform:scaleX(0.8897);transform-origin:0 0;-webkit-text-stroke:0.35px #1a1a1a;">Camera00712.CR2</div>
<div class="t" style="left:580.66px;top:611.26px;font-size:14px;color:#3f5e9c;transform:scaleX(0.9403);transform-origin:0 0;-webkit-text-stroke:0.35px #3f5e9c;">Image Sequence</div>
<div class="t" style="left:891.50px;top:612.46px;font-size:14px;color:#1a1a1a;transform:scaleX(0.9202);transform-origin:0 0;-webkit-text-stroke:0.35px #1a1a1a;">Cancel</div>
<div class="t" style="left:781.00px;top:612.76px;font-size:14px;color:#1a1a1a;transform:scaleX(0.9653);transform-origin:0 0;-webkit-text-stroke:0.35px #1a1a1a;">Open</div>
</body></html>
